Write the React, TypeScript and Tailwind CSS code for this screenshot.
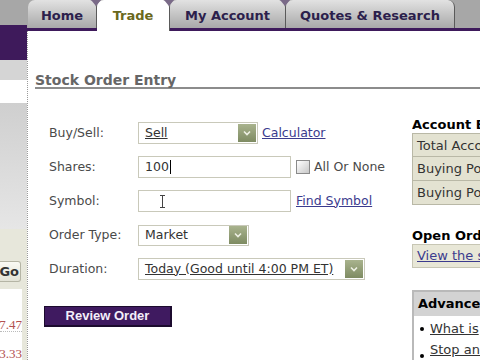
import React from "react";

const Arrow = () => (
  <div className="flex h-[18px] w-[18px] items-center justify-center bg-gradient-to-b from-[#a9b38e] to-[#7e8b62]">
    <svg width="8" height="6" viewBox="0 0 8 6">
      <path d="M1 1.5 L4 4.5 L7 1.5" stroke="#eef0e4" strokeWidth="1.6" fill="none" />
    </svg>
  </div>
);

const Tri = () => (
  <svg className="absolute -right-[5px] top-0 z-10" width="10" height="6" viewBox="0 0 10 6">
    <path d="M0 0 L10 0 L5 6 Z" fill="#7a6a88" />
  </svg>
);

export default function App() {
  const font = "font-['DejaVu_Sans',Verdana,sans-serif]";
  return (
    <div className={`flex h-[360px] w-[480px] overflow-hidden bg-white ${font}`}>
      {/* left sidebar */}
      <div className="flex w-[27px] shrink-0 flex-col">
        <div className="h-[25px] bg-[#a7a7a7]" />
        <div className="h-[35px] bg-[#3e1a5b]" />
        <div className="h-[20px] bg-[#d5d5d5]" />
        <div className="h-[23px] bg-white" />
        <div className="h-[127px] bg-gradient-to-b from-[#cfcfcf] to-[#e6e6e6]" />
        <div className="h-[60px] bg-[#e7e7db] pt-[32px]">
          <div className="flex h-[21px] w-[21px] items-center justify-end rounded-r-[3px] border border-l-0 border-[#b5b5a5] bg-gradient-to-b from-[#fafaf4] to-[#e2e2d6] pr-[1px] text-[13px] font-bold text-[#333]">
            Go
          </div>
        </div>
        <div className="flex flex-1">
          <div className="w-[22px] bg-white pt-[26px] font-['Liberation_Serif',serif] text-[13px] text-[#b25050]">
            <div className="flex h-[17px] justify-end overflow-hidden border-b border-dotted border-[#bbb] whitespace-nowrap">7.47</div>
            <div className="mt-[12px] flex h-[16px] justify-end overflow-hidden whitespace-nowrap">3.33</div>
          </div>
          <div className="flex-1 bg-[#e7e7db]" />
        </div>
      </div>

      {/* main */}
      <div className="flex flex-1 flex-col">
        {/* tab bar */}
        <div className="relative flex h-[31px] items-start bg-[#a7a7a7] pl-[1px]">
          <div className="absolute bottom-0 left-0 h-[3px] w-full bg-[#3e1a5b]" />
          <div className="relative flex h-[28px] w-[69px] items-center justify-center rounded-t-[7px] border-r border-[#5a5a5a] bg-gradient-to-b from-[#e2e2e2] to-[#a9a9a9] pt-[3px] text-[13px] font-bold text-[#2c1f4c]">
            Home
            <Tri />
          </div>
          <div className="relative z-[1] flex h-[31px] w-[73px] items-center justify-center rounded-t-[7px] border-r border-[#5a5a5a] bg-white text-[13px] font-bold text-[#6a681c]">
            Trade
            <Tri />
          </div>
          <div className="relative flex h-[28px] w-[116px] items-center justify-center rounded-t-[7px] border-r border-[#5a5a5a] bg-gradient-to-b from-[#e2e2e2] to-[#a9a9a9] pt-[3px] text-[13px] font-bold text-[#2c1f4c]">
            My Account
            <Tri />
          </div>
          <div className="relative flex h-[28px] w-[169px] items-center justify-center rounded-t-[7px] border-r border-[#5a5a5a] bg-gradient-to-b from-[#e2e2e2] to-[#a9a9a9] pt-[3px] text-[13px] font-bold text-[#2c1f4c]">
            Quotes &amp; Research
          </div>
        </div>

        {/* content */}
        <div className="flex-1 border-l border-dotted border-[#9a9a9a] pl-[7px]">
          <div className="mt-[42px] border-b-2 border-[#8c8c8c] text-[14px] font-bold leading-[14px] text-[#666]">
            Stock Order Entry
          </div>
          <div className="flex">
            {/* form */}
            <div className="w-[377px] shrink-0 pl-[14px] text-[12.5px] text-[#4a4a4a]">
              <div className="mt-[33px] flex flex-col gap-[12px]">
                <div className="flex h-[22px] items-center">
                  <div className="w-[89px]">Buy/Sell:</div>
                  <div className="flex h-[22px] w-[120px] items-center border border-[#c9c9ba] bg-white pl-[6px] pr-[1px]">
                    <span className="flex-1 text-[#333] underline">Sell</span>
                    <Arrow />
                  </div>
                  <span className="ml-[4px] text-[#3b3b8e] underline">Calculator</span>
                </div>
                <div className="flex h-[22px] items-center">
                  <div className="w-[89px]">Shares:</div>
                  <div className="flex h-[22px] w-[153px] items-center border border-[#c9c9ba] bg-white pl-[6px] text-[#333]">
                    100<span className="ml-[1px] h-[14px] w-[1px] bg-black" />
                  </div>
                  <div className="ml-[5px] h-[14px] w-[14px] border border-[#8a8a8a] bg-gradient-to-br from-[#ffffff] to-[#c8c8c8]" />
                  <span className="ml-[4px]">All Or None</span>
                </div>
                <div className="flex h-[22px] items-center">
                  <div className="w-[89px]">Symbol:</div>
                  <div className="flex h-[22px] w-[153px] items-center border border-[#c9c9ba] bg-white pl-[20px]">
                    <svg width="7" height="13" viewBox="0 0 7 13">
                      <path d="M1 0.5 H6 M3.5 0.5 V12.5 M1 12.5 H6" stroke="#444" strokeWidth="1" fill="none" />
                    </svg>
                  </div>
                  <span className="ml-[5px] text-[#3b3b8e] underline">Find Symbol</span>
                </div>
                <div className="flex h-[22px] items-center">
                  <div className="w-[89px]">Order Type:</div>
                  <div className="flex h-[21px] w-[111px] items-center border border-[#c9c9ba] bg-white pl-[6px] pr-[1px]">
                    <span className="flex-1 text-[#333]">Market</span>
                    <Arrow />
                  </div>
                </div>
                <div className="flex h-[22px] items-center">
                  <div className="w-[89px]">Duration:</div>
                  <div className="flex h-[22px] w-[227px] items-center border border-[#c9c9ba] bg-white pl-[6px] pr-[1px]">
                    <span className="flex-1 text-[#333] underline">Today (Good until 4:00 PM ET)</span>
                    <Arrow />
                  </div>
                </div>
              </div>
              <div className="-ml-[5px] mt-[26px] flex h-[21px] w-[128px] items-center justify-center border border-b-2 border-r-2 border-[#1c0b2e] bg-[#3f1a60] font-['Liberation_Sans',Arial,sans-serif] text-[13px] font-bold text-[#f4eefa]">
                Review Order
              </div>
            </div>

            {/* right panel */}
            <div className="flex-1 overflow-hidden whitespace-nowrap text-[13px]">
              <div className="mt-[28px] font-bold leading-[16px] text-black">Account Balances</div>
              <div className="border border-[#b9b8a6] bg-[#e3e2d1] text-[#333]">
                <div className="h-[23px] border-b border-[#b9b8a6] pl-[4px] leading-[23px]">Total Account Value</div>
                <div className="h-[24px] border-b border-[#b9b8a6] pl-[4px] leading-[24px]">Buying Power</div>
                <div className="h-[23px] pl-[4px] leading-[23px]">Buying Power</div>
              </div>
              <div className="mt-[23px] font-bold leading-[16px] text-black">Open Orders</div>
              <div className="h-[24px] border border-[#c7c6b4] bg-[#e8e7d7] pl-[4px] leading-[22px] text-[#3b3b8e] underline">
                View the status
              </div>
              <div className="mt-[22px] border-2 border-r-0 border-[#b9b9b9]">
                <div className="h-[24px] bg-[#d3d3d3] pl-[4px] font-bold leading-[24px] text-black">Advanced Orders</div>
                <ul className="pl-[6px] pt-[2px] text-[#333]">
                  <li className="flex h-[22px] items-center gap-[6px]">
                    <span className="h-[4px] w-[4px] rounded-full bg-black" />
                    <span className="underline">What is</span>
                  </li>
                  <li className="flex h-[22px] items-start gap-[6px]">
                    <span className="mt-[14px] h-[4px] w-[4px] rounded-full bg-black" />
                    <span className="underline">Stop and</span>
                  </li>
                </ul>
              </div>
            </div>
          </div>
        </div>
      </div>
    </div>
  );
}
